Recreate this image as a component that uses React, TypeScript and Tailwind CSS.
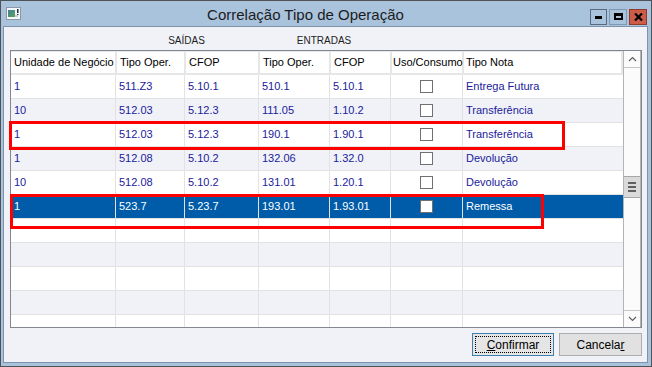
import React, { FC } from 'react';

type Row = {
  unidade: string;
  saiTipo: string;
  saiCfop: string;
  entTipo: string;
  entCfop: string;
  nota: string;
  selected?: boolean;
};

const rows: Row[] = [
  { unidade: '1', saiTipo: '511.Z3', saiCfop: '5.10.1', entTipo: '510.1', entCfop: '5.10.1', nota: 'Entrega Futura' },
  { unidade: '10', saiTipo: '512.03', saiCfop: '5.12.3', entTipo: '111.05', entCfop: '1.10.2', nota: 'Transferência' },
  { unidade: '1', saiTipo: '512.03', saiCfop: '5.12.3', entTipo: '190.1', entCfop: '1.90.1', nota: 'Transferência' },
  { unidade: '1', saiTipo: '512.08', saiCfop: '5.10.2', entTipo: '132.06', entCfop: '1.32.0', nota: 'Devolução' },
  { unidade: '10', saiTipo: '512.08', saiCfop: '5.10.2', entTipo: '131.01', entCfop: '1.20.1', nota: 'Devolução' },
  { unidade: '1', saiTipo: '523.7', saiCfop: '5.23.7', entTipo: '193.01', entCfop: '1.93.01', nota: 'Remessa', selected: true },
];

const Checkbox: FC = () => (
  <div className="w-[13px] h-[13px] border border-[#707070] bg-white" />
);

const TitleIcon: FC = () => (
  <svg width="15" height="13" viewBox="0 0 15 13" className="shrink-0">
    <rect x="0.5" y="0.5" width="14" height="12" fill="#f4f6f8" stroke="#8c98a6" />
    <defs>
      <linearGradient id="ic" x1="0" y1="0" x2="1" y2="1">
        <stop offset="0" stopColor="#3d7f9a" />
        <stop offset="1" stopColor="#5ea35a" />
      </linearGradient>
    </defs>
    <rect x="2" y="3" width="7" height="7" fill="url(#ic)" />
    <rect x="9" y="8" width="3" height="2" fill="#c9d0d6" />
    <rect x="11" y="2" width="1.5" height="4" fill="#1f2a35" />
    <rect x="11" y="7" width="1.5" height="1" fill="#1f2a35" />
  </svg>
);

const ScrollBar: FC = () => (
  <div className="w-[18px] h-full flex flex-col border-x border-[#b4b4b4] bg-[#fbfbfb]">
    <div className="h-[17px] border-b border-[#c6c6c6] flex items-center justify-center">
      <svg width="9" height="6" viewBox="0 0 9 6">
        <path d="M1 5 L4.5 1.5 L8 5" fill="none" stroke="#606060" strokeWidth="1.2" />
      </svg>
    </div>
    <div className="h-[108px]" />
    <div className="h-[22px] bg-[#dadada] border-y border-[#a8a8a8] flex flex-col items-center justify-center gap-[2px]">
      <div className="w-[8px] h-[2px] bg-[#606060]" />
      <div className="w-[8px] h-[2px] bg-[#606060]" />
      <div className="w-[8px] h-[2px] bg-[#606060]" />
    </div>
    <div className="flex-1" />
    <div className="h-[17px] border-t border-[#c6c6c6] flex items-center justify-center">
      <svg width="9" height="6" viewBox="0 0 9 6">
        <path d="M1 1 L4.5 4.5 L8 1" fill="none" stroke="#606060" strokeWidth="1.2" />
      </svg>
    </div>
  </div>
);

const App: FC = () => {
  const cellTxt = 'h-full flex items-center pl-[3px] border-r border-[#e2e2e2] whitespace-nowrap';

  return (
    <div className="w-[652px] h-[367px] border border-[#4f5358] bg-[#a9c3dd] flex flex-col font-['Liberation_Sans',Arial,sans-serif] select-none overflow-hidden">
      {/* title bar */}
      <div className="h-[25px] flex items-center pl-[5px] pr-[4px] shrink-0">
        <TitleIcon />
        <div className="flex-1 text-center text-[15px] text-[#1c1c1c] leading-none pt-[2px]">
          Correlação Tipo de Operação
        </div>
        <div className="flex items-center gap-[2px] pt-[6px]">
          <div className="w-[17px] h-[16px] border border-[#5a6b80] flex items-end justify-center pb-[5px]">
            <div className="w-[7px] h-[3px] bg-black" />
          </div>
          <div className="w-[18px] h-[16px] border border-[#7f97b0] flex items-center justify-center">
            <div className="w-[9px] h-[7px] border-2 border-black border-t-[3px]" />
          </div>
          <div className="w-[18px] h-[16px] border border-[#8e3b2c] bg-[#cc5c48] flex items-center justify-center">
            <svg width="9" height="8" viewBox="0 0 9 8">
              <path d="M1 0.5 L8 7.5 M8 0.5 L1 7.5" stroke="#000" strokeWidth="2.2" />
            </svg>
          </div>
        </div>
      </div>

      {/* content */}
      <div className="flex-1 ml-[2px] mr-[3px] mb-[3px] border border-[#7d93ab] bg-[#f0f2f7] flex flex-col pl-[6px] pr-[5px]">
        <div className="h-[23px] flex items-end pb-[4px] text-[10px] text-[#1e1e1e] leading-none">
          <div className="w-[105px]" />
          <div className="w-[143px] text-center">SAÍDAS</div>
          <div className="w-[132px] text-center">ENTRADAS</div>
        </div>

        <div className="relative">
          <div className="w-[632px] h-[278px] border border-[#828790] bg-white flex overflow-hidden">
            <div className="w-[612px] flex flex-col text-[11px]">
              {/* header */}
              <div className="h-[24px] flex shrink-0 text-black border-t border-l border-b-2 border-[#e6e6e6] -ml-px">
                <div className="w-[106px] h-full flex items-center pl-[3px] border-r-2 border-[#e6e6e6]">Unidade de Negócio</div>
                <div className="w-[69px] h-full flex items-center pl-[3px] border-r-2 border-[#e6e6e6]">Tipo Oper.</div>
                <div className="w-[74px] h-full flex items-center pl-[3px] border-r-2 border-[#e6e6e6]">CFOP</div>
                <div className="w-[71px] h-full flex items-center pl-[3px] border-r-2 border-[#e6e6e6]">Tipo Oper.</div>
                <div className="w-[61px] h-full flex items-center pl-[3px] border-r-2 border-[#e6e6e6]">CFOP</div>
                <div className="w-[72px] h-full flex items-center pl-[1px] border-r-2 border-[#e6e6e6]">Uso/Consumo</div>
                <div className="w-[159px] h-full flex items-center pl-[2px] border-r-2 border-[#e6e6e6]">Tipo Nota</div>
              </div>

              {rows.map((r, i) => (
                <div
                  key={i}
                  className={
                    'h-[24px] flex shrink-0 border-b border-[#e2e2e2] ' +
                    (r.selected ? 'bg-[#005ca8] text-white' : i % 2 === 1 ? 'bg-[#f0f2f7] text-[#1a1a9c]' : 'bg-white text-[#1a1a9c]')
                  }
                >
                  <div className={'w-[105px] ' + cellTxt}>{r.unidade}</div>
                  <div className={'w-[69px] ' + cellTxt}>{r.saiTipo}</div>
                  <div className={'w-[74px] ' + cellTxt}>{r.saiCfop}</div>
                  <div className={'w-[71px] ' + cellTxt}>{r.entTipo}</div>
                  <div className={'w-[61px] ' + cellTxt}>{r.entCfop}</div>
                  <div className="w-[72px] h-full flex items-center justify-center border-r border-[#e2e2e2]">
                    <Checkbox />
                  </div>
                  <div className="w-[160px] h-full flex items-center pl-[3px]">{r.nota}</div>
                </div>
              ))}

              {[0, 1, 2, 3, 4].map((i) => (
                <div
                  key={'e' + i}
                  className={'h-[24px] flex shrink-0 border-b border-[#e2e2e2] ' + (i % 2 === 1 ? 'bg-[#f0f2f7]' : 'bg-white')}
                >
                  <div className="w-[105px] h-full border-r border-[#e2e2e2]" />
                  <div className="w-[69px] h-full border-r border-[#e2e2e2]" />
                  <div className="w-[74px] h-full border-r border-[#e2e2e2]" />
                  <div className="w-[71px] h-full border-r border-[#e2e2e2]" />
                  <div className="w-[61px] h-full border-r border-[#e2e2e2]" />
                  <div className="w-[72px] h-full border-r border-[#e2e2e2]" />
                  <div className="w-[160px] h-full" />
                </div>
              ))}
            </div>
            <ScrollBar />
          </div>

          {/* red highlight marks */}
          <div className="absolute left-[-1px] top-[71px] w-[556px] h-[29px] border-[3px] border-[#ff0000] pointer-events-none" />
          <div className="absolute left-0 top-[144px] w-[534px] h-[35px] border-[3px] border-[#ff0000] pointer-events-none" />
        </div>

        <div className="flex justify-end gap-[5px] mt-[5px] text-[12px] text-black">
          <div className="w-[82px] h-[23px] border border-[#3c7fb1] bg-[#e5e5e5] p-[2px]">
            <div className="w-full h-full border border-dotted border-black flex items-center justify-center">
              <span><span className="underline">C</span>onfirmar</span>
            </div>
          </div>
          <div className="w-[83px] h-[23px] border border-[#adadad] bg-[#e1e1e1] flex items-center justify-center">
            <span>Cancela<span className="underline">r</span></span>
          </div>
        </div>
      </div>
    </div>
  );
};

export default App;
